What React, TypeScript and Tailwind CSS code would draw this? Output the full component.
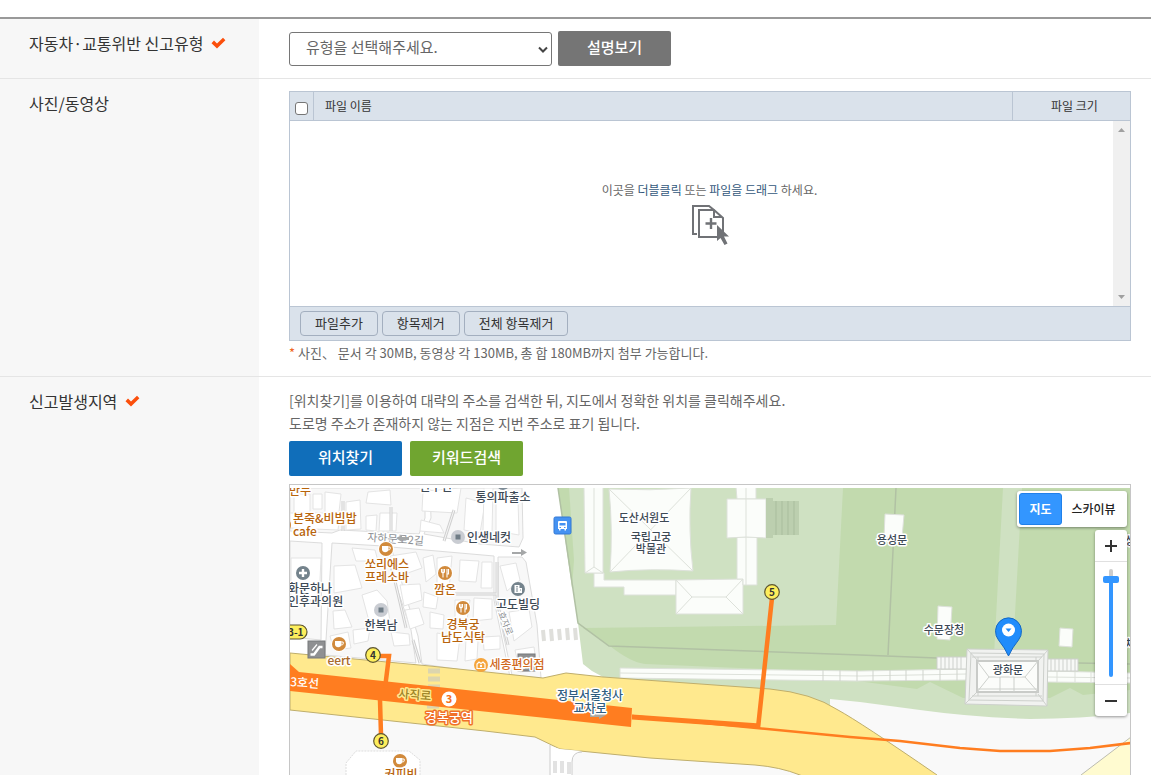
import { useState, type ReactNode } from "react";

const ORANGE = "#b8640c";
const DARK = "#3d4955";

type MapLabel = {
  x: number;
  y: number;
  text: string;
  color?: string;
  anchor?: "start" | "middle";
};

const LABELS: MapLabel[] = [
  { x: 289, y: 495, text: "만두", color: ORANGE, anchor: "start" },
  { x: 293, y: 523, text: "본죽&비빔밥", color: ORANGE, anchor: "start" },
  { x: 293, y: 536, text: "cafe", color: ORANGE, anchor: "start" },
  { x: 436, y: 491, text: "한우산" },
  { x: 503, y: 502, text: "통의파출소" },
  { x: 489, y: 542, text: "인생네컷" },
  { x: 387, y: 569, text: "쏘리에스", color: ORANGE },
  { x: 387, y: 582, text: "프레소바", color: ORANGE },
  { x: 445, y: 594, text: "깜온", color: ORANGE },
  { x: 288, y: 593, text: "화문하나", anchor: "start" },
  { x: 288, y: 606, text: "인후과의원", anchor: "start" },
  { x: 381, y: 630, text: "한복남" },
  { x: 518, y: 609, text: "고도빌딩" },
  { x: 463, y: 629, text: "경복궁", color: ORANGE },
  { x: 463, y: 642, text: "남도식탁", color: ORANGE },
  { x: 339, y: 665, text: "eert", color: "#a8692a" },
  { x: 517, y: 669, text: "세종편의점", color: "#d0691c" },
  { x: 590, y: 700, text: "정부서울청사", color: "#2f5d80" },
  { x: 590, y: 713, text: "교차로", color: "#2f5d80" },
  { x: 401, y: 779, text: "커피빈", color: ORANGE },
];

const SMALL_LABELS: MapLabel[] = [
  { x: 644, y: 522, text: "도산서원도" },
  { x: 651, y: 541, text: "국립고궁" },
  { x: 651, y: 553, text: "박물관" },
  { x: 892, y: 544, text: "용성문" },
  { x: 944, y: 634, text: "수문장청" },
  { x: 1008, y: 674, text: "광화문" },
  { x: 1125, y: 545, text: "성당", anchor: "start" },
  { x: 1125, y: 648, text: "차고", anchor: "start" },
];

// city blocks west of the palace
const BLOCKS = [
  "290,488 425,488 425,518 419,534 340,530 332,533 290,531",
  "430,488 522,488 523,538 519,547 480,544 424,534 431,518",
  "290,541 322,543 321,640 290,637",
  "332,543 383,546 411,630 416,663 325,655 326,640",
  "391,547 494,556 494,600 510,677 422,664 418,636",
  "498,557 522,557 526,562 537,625 541,678 512,675 498,610",
];

const HOUSES = [
  "294,494 310,494 310,512 294,513",
  "313,494 322,494 322,509 313,509",
  "325,492 341,494 339,512 325,513",
  "346,502 360,500 361,529 346,530",
  "290,513 340,513 338,530 290,528",
  "368,492 390,490 391,505 366,503",
  "366,516 377,515 376,531 366,530",
  "380,513 397,513 396,531 379,531",
  "423,491 461,488 457,513 422,511",
  "466,498 485,503 480,533 464,530",
  "484,488 493,488 492,533 483,531",
  "496,500 518,499 519,535 496,531",
  "421,520 440,525 444,533 420,531",
  "291,558 321,558 320,580 321,600 291,600",
  "334,566 355,565 362,588 340,592 334,593",
  "352,548 375,550 378,561 356,561",
  "333,611 345,610 352,627 334,629",
  "362,595 377,590 387,601 390,622 370,625",
  "390,556 416,552 422,568 402,575",
  "400,585 420,584 422,600 404,606",
  "405,610 419,608 424,624 410,629",
  "423,558 433,555 436,574 426,582",
  "437,558 452,556 449,590 437,588",
  "460,560 479,561 476,582 459,581",
  "482,562 492,562 492,588 481,588",
  "424,592 438,597 436,609 423,607",
  "455,600 470,600 467,620 455,618",
  "474,598 492,599 492,619 473,621",
  "430,612 444,615 443,629 430,628",
  "437,633 460,637 457,661 437,660",
  "466,638 478,641 477,659 465,661",
  "483,637 500,636 500,649 484,650",
  "500,566 516,563 520,580 507,591",
  "509,612 529,609 532,627 514,641",
  "515,650 534,647 537,670 520,672",
  "330,636 348,632 351,648 334,650",
  "353,630 370,628 368,641 354,644",
  "391,632 409,634 410,645 394,646",
];

const WALL_JOINTS = [823, 840, 857, 873, 890, 906, 923, 940, 957];

const ALLEYS =
  "M343 501V531M391 507V531M454 510 444 541M390 560 406 628M413 640 420 663M497 562V602L508 645M455 594H497";

function CheckMark() {
  return (
    <svg width="15" height="12" viewBox="0 0 15 12" className="shrink-0" aria-hidden="true">
      <path d="M0.5 6.2 3 3.6l3 2.8L12 0.8 14.4 3.2 6 11.6Z" fill="#fb4f0c" />
    </svg>
  );
}

function FormRow({
  label,
  htmlFor,
  required,
  last,
  children,
}: {
  label: string;
  htmlFor?: string;
  required?: boolean;
  last?: boolean;
  children: ReactNode;
}) {
  return (
    <div className={last ? "flex min-h-0 flex-1" : "flex border-b border-[#e5e5e5]"}>
      <div className="w-[259px] shrink-0 bg-[#f7f7f7] pt-3 pl-[29px]">
        <div className="flex items-center gap-2 text-base leading-6 text-[#333]">
          {htmlFor ? <label htmlFor={htmlFor}>{label}</label> : <span>{label}</span>}
          {required && <CheckMark />}
        </div>
      </div>
      {children}
    </div>
  );
}

function FileDropIcon() {
  return (
    <svg width="38" height="42" viewBox="0 0 38 42" fill="none" aria-hidden="true">
      <path d="M6 30H2V2h16l5 4" stroke="#707276" strokeWidth="2" />
      <path d="M8 6h15l9 8v19H8Z" stroke="#707276" strokeWidth="2" />
      <path d="M23 6v7h8" stroke="#707276" strokeWidth="2" />
      <path d="M20 14v11M14.500 19.500h11" stroke="#707276" strokeWidth="2.400" />
      <path d="M26 21v16l3.500-3 4 7 3-1.500-3.500-7h5Z" fill="#707276" />
    </svg>
  );
}

function FilePanel() {
  const buttonClass =
    "h-[25px] rounded-[4px] border border-[#a3afbf] px-3.5 pb-0.5 text-[13px] leading-none text-[#333]";

  return (
    <div className="border border-[#bac5d3] text-xs text-[#333]">
      <table className="w-full border-separate border-spacing-0 bg-[#dae2eb]">
        <thead>
          <tr className="h-[29px]">
            <th className="w-6 border-r border-b border-[#bac5d3] p-0 align-bottom">
              <input
                type="checkbox"
                aria-label="전체 선택"
                className="mx-auto mb-[5px] block size-[13px] appearance-none rounded-[3px] border border-[#767676] bg-white"
              />
            </th>
            <th className="border-b border-[#bac5d3] py-0 pl-[11px] text-left font-normal">파일 이름</th>
            <th className="w-[118px] border-b border-l border-[#bac5d3] py-0 pl-1.5 text-center font-normal">
              파일 크기
            </th>
          </tr>
        </thead>
      </table>
      <div className="flex h-[185px] bg-white">
        <div className="flex flex-1 flex-col items-center pt-[59px] pl-4">
          <p className="leading-5 text-[#666]">
            이곳을 <span className="text-[#33587c]">더블클릭</span> 또는{" "}
            <span className="text-[#33587c]">파일을 드래그</span> 하세요.
          </p>
          <div className="mt-1">
            <FileDropIcon />
          </div>
        </div>
        <div className="flex w-[17px] flex-col items-center justify-between bg-[#f0f0f0] py-[7px]">
          <svg width="7" height="4" aria-hidden="true">
            <path d="M0 4 3.500 0 7 4Z" fill="#a0a0a0" />
          </svg>
          <svg width="7" height="4" aria-hidden="true">
            <path d="M0 0 3.500 4 7 0Z" fill="#a0a0a0" />
          </svg>
        </div>
      </div>
      <div className="flex gap-1 border-t border-[#bac5d3] bg-[#dae2eb] px-2.5 py-1">
        <button type="button" className={buttonClass}>
          파일추가
        </button>
        <button type="button" className={buttonClass}>
          항목제거
        </button>
        <button type="button" className={buttonClass}>
          전체 항목제거
        </button>
      </div>
    </div>
  );
}

function Cup({ x, y }: { x: number; y: number }) {
  return (
    <g transform={`translate(${x} ${y})`}>
      <circle r="8" fill="#fff" />
      <circle r="7" fill="#d18a3c" />
      <path d="M-4-3H2.500V0.500Q2 3.200-0.800 3.200T-4 0.500Z" fill="#fff" />
      <path d="M2.500-2H4.200V0Q4 1 2.200 1" fill="none" stroke="#fff" strokeWidth="1" />
    </g>
  );
}

function Fork({ x, y }: { x: number; y: number }) {
  return (
    <g transform={`translate(${x} ${y})`}>
      <circle r="8" fill="#fff" />
      <circle r="7" fill="#d18a3c" />
      <path
        d="M-3.500-4V-1.500Q-3.500 0-2 0T-0.500-1.500V-4M-2-4V4.500M2-4V4.500M3.500-4V1H2.500"
        fill="none"
        stroke="#fff"
        strokeWidth="1.100"
      />
    </g>
  );
}

function Dot({ x, y }: { x: number; y: number }) {
  return (
    <g transform={`translate(${x} ${y})`}>
      <circle r="7" fill="#c9ccd2" />
      <rect x="-2.500" y="-2.500" width="5" height="5" fill="#6f7c86" />
    </g>
  );
}

function Exit({ x, y, children }: { x: number; y: number; children: string }) {
  return (
    <g>
      <circle cx={x} cy={y} r="7.300" fill="#fdee5c" stroke="#5d5530" strokeWidth="1.200" />
      <text x={x} y={y + 4} textAnchor="middle" fontSize="10" fontWeight="700" fill="#333">
        {children}
      </text>
    </g>
  );
}

function Escalator({ x, y }: { x: number; y: number }) {
  return (
    <g transform={`translate(${x} ${y})`}>
      <rect width="17" height="17" fill="#8f9092" stroke="#77787a" />
      <path d="M2.500 13.500H6L11.500 6H14.500" stroke="#fff" strokeWidth="2.400" fill="none" />
      <path d="M4 9.500 9 3.500" stroke="#fff" strokeWidth="1.200" />
    </g>
  );
}

function MapDrawing() {
  return (
    <svg
      className="block size-full"
      role="img"
      aria-label="지도"
      fontFamily='"Noto Sans CJK KR", sans-serif'
    >
      <rect width="100%" height="100%" fill="#f9f9f9" />
      <g transform="translate(-290 -488)">
        {/* streets */}
        <path d="M290 488H620V690L290 655Z" fill="#fff" />
        <g fill="#f8f8f8" stroke="#dcdcdc">
          {BLOCKS.map((points) => (
            <polygon key={points} points={points} />
          ))}
        </g>
        <g fill="#fff" stroke="#e4e4e4">
          {HOUSES.map((points) => (
            <polygon key={points} points={points} />
          ))}
        </g>
        <path d={ALLEYS} fill="none" stroke="#d0d0d0" strokeWidth="3" />
        <path d={ALLEYS} fill="none" stroke="#f6f6f6" />

        {/* palace grounds */}
        <path
          d="M558 488H1131V713Q1080 719 1030 719Q970 717 920 710L860 702 830 699V706L770 690 603 677 592 671 583 664 578 623Z"
          fill="#cfe1c2"
        />
        <path d="M558 488H569L574 560 572 588Z" fill="#c2daae" />
        <path
          d="M843 488H1131V690L1083 695 1070 688 1050 698H963L930 682 917 689 850 680 840 672 645 664Q630 662 610 646L583 628 836 625Z"
          fill="#c2daae"
        />
        <path d="M1003 488H1022L1013 650 994 655Z" fill="#cfe1c2" />
        <path
          d="M558 488 578 623 609 646 860 655 937 658M1078 663 1131 664M896 488 888 655"
          fill="none"
          stroke="#b1c1a4"
          strokeWidth="1.500"
        />

        {/* palace buildings */}
        <g fill="#fbfdfa" stroke="#dde1da">
          <path d="M594 573V587H624V595H676V580H604V573Z" />
          <path d="M584 487H603V573H585Z" />
          <path d="M585 573 594 567 603 573M594 487V567" fill="none" />
          <path d="M609 489Q650 491 691 488Q688 530 693 571Q650 568 610 572Q613 530 609 489Z" />
          <path d="M609 489 693 571M691 488 610 572" fill="none" />
          <path d="M676 580 743 579V614H676Z" />
          <path d="M676 580 692 597H726L743 579M676 614 692 597M726 597 743 614" fill="none" />
          <path d="M736 487H756V499H737ZM737 537H757V585H743V579H737Z" />
          <path d="M727 499H766V538Q746 536 727 538Z" />
          <path d="M746 488V585" fill="none" />
          <path d="M885 514 904 515 902 538 884 537ZM938 606 952 607 950 640 937 639ZM1060 628 1073 629 1072 647 1059 646Z" />
          <path d="M620 668 860 671 967 669V680L857 681 620 678Z" />
          <path d="M1047 671 1131 673V683L1047 682Z" />
          <path
            d="M620 673 860 676 967 674M1047 677 1131 678M1057 672V682M1075 672V682M1091 672V682M1110 673V683"
            fill="none"
          />
          {WALL_JOINTS.map((x) => (
            <path key={x} d={`M${x} 670V681`} stroke="#cfd3cc" />
          ))}
        </g>
        <path d="M766 498H773V501H799V535H773V538H766Z" fill="#bccfaf" />
        <path d="M776 501V535M782 501V535M788 501V535M794 501V535" stroke="#a9bd9d" />
        <g stroke="#cdd0cc" fill="#f7f8f6">
          <rect x="937" y="657" width="31" height="12" />
          <rect x="1047" y="659" width="31" height="12" />
          <path d="M941 657V669M945 657V669M949 657V669M953 657V669M957 657V669M961 657V669M1051 659V671M1055 659V671M1059 659V671M1063 659V671M1067 659V671M1071 659V671M1075 659V671" />
          <path d="M967 649 1048 650 1047 706 965 704Z" fill="#f1f2f0" />
          <path
            d="M971 653 1044 654 1043 701 969 700ZM967 649 978 661M1048 650 1038 661M965 704 977 692M1047 706 1038 694M978 657V696M1036 657V696M972 657H1042M972 696H1042"
            fill="none"
          />
          <path d="M977 661H1038V692H977Z" fill="#fbfcfa" strokeWidth="2" stroke="#c9cbc8" />
          <path
            d="M977 661 989 677H1025L1038 661M977 692 989 677M1025 677 1038 692M1000 677V692M1014 677V692M977 689H1038"
            fill="none"
          />
        </g>

        {/* main road and crossings */}
        <path
          d="M290 653 430 666 543 678 566 673 603 677 770 689Q812 693 838 710Q860 722 937 775V780H810L800 775Q780 767 755 765L650 758 560 749 535 737 485 731 290 710Z"
          fill="#ffe98e"
          stroke="#bfae6c"
        />
        <path d="M550 746 560 749 582 751Q572 752 572 762V780H550Z" fill="#fff" />
        <path d="M550 745V780M582 752Q572 752 572 762V780" fill="none" stroke="#ccc" />
        <path d="M1131 737 1081 775 1076 780H1131Z" fill="#fffbd0" stroke="#bcbcb0" />
        <path d="M346 775V763L356 751H409L420 760V780" fill="#fff" stroke="#ddd" strokeDasharray="2 1" />
        <g stroke="#dfdfdb" strokeWidth="4">
          <path d="M543 630 544 641M551 629 552 641M559 629 560 640M567 628 568 640M575 628 576 640" />
          <path d="M555 761V773M562 761V773M569 762V774" stroke="#e2e2e2" />
          <path d="M428 671H440M428 679H440M428 687H440M427 706H439" stroke="#dcd5ae" strokeWidth="5" />
        </g>

        {/* subway line 3 */}
        <path d="M290 664 299 672 632 708 631 727 290 691Z" fill="#ff7d20" />
        <g fill="none" stroke="#ff7d20">
          <path d="M632 717 760 726" strokeWidth="5" />
          <path d="M632 716 850 737 900 741 960 748 1000 751H1050L1090 748 1131 743" strokeWidth="2.500" />
          <path d="M772 598 758 728M375 656H389L385 688M380 700 381 735" strokeWidth="4.500" />
        </g>

        {/* street names */}
        <g strokeLinejoin="round" paintOrder="stroke" stroke="#fff" strokeWidth="3" fill="#8d9094">
          <text x="367" y="541" fontSize="11" transform="rotate(4 367 541)">
            자하문로2길
          </text>
          <text x="498" y="613" fontSize="9" transform="rotate(68 498 613)">
            효자로
          </text>
        </g>
        <path d="M512 552H521V549L527 552.500 521 556V554H512Z" fill="#a5a7a8" />
        <path d="M396 538 402 535V537H409V540H402V542Z" fill="#a5a7a8" />
        <path d="M590 713H599V710L606 715 599 719V717H590Z" fill="#aaa69f" />

        {/* place markers */}
        <Cup x={386} y={549} />
        <Fork x={445} y={573} />
        <Fork x={463} y={608} />
        <Cup x={339} y={644} />
        <Cup x={400} y={761} />
        <Dot x={458} y={537} />
        <Dot x={381} y={610} />
        <circle cx="503" cy="483" r="7" fill="#7d8a94" />
        <circle cx="284" cy="525" r="7" fill="#d18a3c" />
        <g transform="translate(303 573)">
          <circle r="7" fill="#74838c" />
          <path d="M-4 0H4M0-4V4" stroke="#fff" strokeWidth="2.400" />
        </g>
        <g transform="translate(518 589)">
          <circle r="7" fill="#74838c" />
          <path d="M-3.500 4V-4H1.500V-1H4V4Z" fill="#fff" />
          <path d="M-2-2.200H0M-2 0H0M-2 2H0M2 1H3" stroke="#74838c" />
        </g>
        <Escalator x={308} y={641} />
        <Escalator x={518} y={654} />
        <g transform="translate(481 665)">
          <circle r="7" fill="#f5a53c" />
          <path d="M-4 3.500V-1L-2-3 0-1.500 2-3 4-1V3.500Z" fill="none" stroke="#fff" strokeWidth="1.200" />
          <circle cy="1" r="1.200" fill="#fff" />
        </g>
        <g transform="translate(554 517)">
          <rect width="17" height="17" rx="1.500" fill="#4592f2" stroke="#3479d4" />
          <path
            d="M4 5Q4 4 5 4H12Q13 4 13 5V12H12V13.500H10.500V12H6.500V13.500H5V12H4Z"
            fill="#fff"
          />
          <path d="M5.500 6H11.500V8.500H5.500ZM5.500 10H7V11H5.500ZM10 10H11.500V11H10Z" fill="#4592f2" />
        </g>

        {/* place names */}
        <g strokeLinejoin="round" paintOrder="stroke" stroke="#fff" strokeWidth="3" fontWeight="500">
          <g fontSize="12">
            {LABELS.map((l) => (
              <text key={l.text} x={l.x} y={l.y} fill={l.color ?? DARK} textAnchor={l.anchor ?? "middle"}>
                {l.text}
              </text>
            ))}
          </g>
          <g fontSize="11">
            {SMALL_LABELS.map((l) => (
              <text key={l.text} x={l.x} y={l.y} fill={DARK} textAnchor={l.anchor ?? "middle"}>
                {l.text}
              </text>
            ))}
          </g>
          <text x="398" y="698" fontSize="12" fill="#9d8428" stroke="#ffe98e" transform="rotate(4 398 698)">
            사직로
          </text>
          <text x="449" y="722" fontSize="13" fill="#fff" stroke="#f0702a" textAnchor="middle">
            경복궁역
          </text>
          <text x="290" y="686" fontSize="12" fill="#fff" stroke="none" transform="rotate(4 290 686)">
            3호선
          </text>
        </g>

        <Exit x={373} y={655}>4</Exit>
        <Exit x={772} y={592}>5</Exit>
        <Exit x={381} y={741}>6</Exit>
        <rect x="276" y="625" width="31" height="14" rx="7" fill="#fdee5c" stroke="#5d5530" strokeWidth="1.200" />
        <text x="288" y="636" fontSize="10" fontWeight="700" fill="#333">
          3-1
        </text>
        <circle cx="449" cy="699" r="7.500" fill="#fff" />
        <text x="449" y="703" fontSize="11" fontWeight="700" fill="#f5701c" textAnchor="middle">
          3
        </text>

        {/* selected place */}
        <path
          d="M1008.500 656Q1005 648 998.500 640A13 13.500 0 1 1 1018.500 640Q1012 648 1008.500 656Z"
          fill="#218cfb"
          stroke="#1368c4"
        />
        <circle cx="1008.500" cy="630" r="6.500" fill="#fff" />
        <path d="M1005.500 628.500H1011.500L1008.500 632Z" fill="#218cfb" />
      </g>
    </svg>
  );
}

function MapControls() {
  const [level, setLevel] = useState(93);

  return (
    <div className="absolute top-[3px] right-[3px] flex flex-col items-end gap-[3px] text-[#222]">
      <div className="flex rounded-[3px] bg-white p-0.5 shadow-[0_1px_3px_rgba(0,0,0,0.4)]">
        <button
          type="button"
          className="h-8 w-[43px] rounded-[3px] border border-[#2080ea] bg-[#3396ff] text-xs font-bold text-white"
        >
          지도
        </button>
        <button type="button" className="h-8 w-[63px] text-xs font-medium">
          스카이뷰
        </button>
      </div>
      <div className="flex w-8 flex-col rounded-[3px] bg-white shadow-[0_1px_3px_rgba(0,0,0,0.4)]">
        <button
          type="button"
          aria-label="확대"
          onClick={() => setLevel(Math.min(100, level + 7))}
          className="flex h-8 items-center justify-center border-b border-[#e0e0e0]"
        >
          <svg width="12" height="12" aria-hidden="true">
            <path d="M0 6H12M6 0V12" stroke="#333" strokeWidth="2" />
          </svg>
        </button>
        <div className="flex h-[122px] justify-center pt-[7px]">
          <input
            type="range"
            aria-label="지도 확대 수준"
            value={level}
            onChange={(e) => setLevel(Number(e.target.value))}
            className="h-[108px] w-1 appearance-none rounded-full bg-[linear-gradient(to_bottom,#ccc_10%,#3396ff_10%)] [direction:rtl] [writing-mode:vertical-lr] [&::-webkit-slider-thumb]:h-[7px] [&::-webkit-slider-thumb]:w-4 [&::-webkit-slider-thumb]:appearance-none [&::-webkit-slider-thumb]:rounded-[2px] [&::-webkit-slider-thumb]:bg-[#3396ff]"
          />
        </div>
        <button
          type="button"
          aria-label="축소"
          onClick={() => setLevel(Math.max(0, level - 7))}
          className="flex h-8 items-center justify-center border-t border-[#e0e0e0]"
        >
          <svg width="12" height="2" aria-hidden="true">
            <path d="M0 1H12" stroke="#333" strokeWidth="2" />
          </svg>
        </button>
      </div>
    </div>
  );
}

export default function App() {
  return (
    <main className="flex h-screen flex-col overflow-hidden bg-white pt-[17px] pr-0.5 font-['Noto_Sans_CJK_KR',sans-serif]">
      <form className="flex min-h-0 flex-1 flex-col border-t-2 border-[#999]" onSubmit={(e) => e.preventDefault()}>
        <FormRow label="자동차·교통위반 신고유형" htmlFor="report-type" required>
          <div className="flex flex-1 items-end gap-1.5 py-3 pr-5 pl-[30px]">
            <div className="relative">
              <select
                id="report-type"
                className="h-[34px] w-[263px] appearance-none rounded-[3px] border border-[#767676] bg-white pb-1 pl-4 text-[15px] leading-5 text-[#666]"
              >
                <option>유형을 선택해주세요.</option>
              </select>
              <svg
                className="pointer-events-none absolute top-[14px] right-1"
                width="10"
                height="7"
                fill="none"
                aria-hidden="true"
              >
                <path d="M1 1.500 5 5.500 9 1.500" stroke="#444" strokeWidth="2" />
              </svg>
            </div>
            <button
              type="button"
              className="h-[35px] w-[113px] rounded-[2px] bg-[#757575] pb-0.5 text-[15px] font-medium text-white"
            >
              설명보기
            </button>
          </div>
        </FormRow>

        <FormRow label="사진/동영상">
          <div className="min-w-0 flex-1 pt-3 pr-5 pb-3 pl-[30px]">
            <FilePanel />
            <p className="text-[13px] leading-[23px] text-[#666]">
              <span className="text-[#f0641e]">*</span> 사진、 문서 각 30MB, 동영상 각 130MB, 총 합 180MB까지 첨부
              가능합니다.
            </p>
          </div>
        </FormRow>

        <FormRow label="신고발생지역" required last>
          <div className="flex min-w-0 flex-1 flex-col pt-3 pr-5 pl-[30px]">
            <p className="text-sm leading-[23px] text-[#666]">
              [위치찾기]를 이용하여 대략의 주소를 검색한 뒤, 지도에서 정확한 위치를 클릭해주세요.
              <br />
              도로명 주소가 존재하지 않는 지점은 지번 주소로 표기 됩니다.
            </p>
            <div className="mt-1.5 flex gap-2">
              <button
                type="button"
                className="h-[35px] w-[113px] rounded-[2px] bg-[#106eba] pb-0.5 text-[15px] font-medium text-white"
              >
                위치찾기
              </button>
              <button
                type="button"
                className="h-[35px] w-[113px] rounded-[2px] bg-[#70a530] pb-0.5 text-[15px] font-medium text-white"
              >
                키워드검색
              </button>
            </div>
            <div className="mt-2 min-h-0 flex-1 border border-b-0 border-[#c6c6c6] pt-[3px]">
              <div className="relative h-full overflow-hidden">
                <MapDrawing />
                <MapControls />
              </div>
            </div>
          </div>
        </FormRow>
      </form>
    </main>
  );
}
